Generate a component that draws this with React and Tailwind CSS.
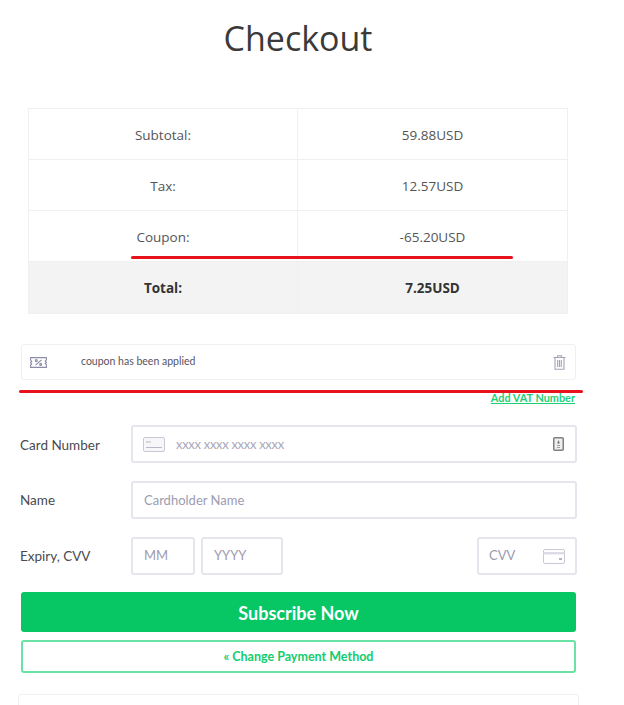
function SummaryRow({ label, value, bold, shaded }) {
  return (
    <div className={`grid grid-cols-[269px_1fr] h-[51px] border-b border-[#f0f0f0] last:border-b-0 text-[13.5px] ${bold ? "font-bold text-[#333333]" : "text-[#555555]"} ${shaded ? "bg-[#f3f3f3]" : ""}`}>
      <div className="flex items-center justify-center pt-[2px] border-r border-[#f0f0f0]">{label}</div>
      <div className="flex items-center justify-center pt-[2px]">{value}</div>
    </div>
  );
}

function TicketIcon() {
  return (
    <svg width="17" height="11" viewBox="0 0 17 11" fill="none" stroke="#8c8ca6" strokeWidth="1.1">
      <path d="M.6.6h15.800v2.400l-1.200 1 1.200 1.500-1.200 1 1.200 1v2.900H.6V8l1.200-1L.6 5.500l1.200-1L.6 3z" />
      <path d="M5.500 8.200l6-5.400" />
      <circle cx="6.300" cy="3.600" r="1" />
      <circle cx="10.700" cy="7.400" r="1" />
    </svg>
  );
}

function TrashIcon() {
  return (
    <svg width="13" height="15" viewBox="0 0 13 15" fill="none" stroke="#a4a4b8" strokeWidth="1.100">
      <path d="M.5 2.500h12M4.500 2.500V.7h4v1.800M2 2.500v11.800h9V2.500M4.700 5v7M6.500 5v7M8.300 5v7" />
    </svg>
  );
}

function CardFrontIcon() {
  return (
    <svg width="22" height="15" viewBox="0 0 22 15" fill="none">
      <rect x=".5" y=".5" width="21" height="14" rx="1.500" fill="#f7f7fa" stroke="#c8c8d6" />
      <path d="M3 5h5M3 10.500h16" stroke="#b8b8c8" strokeWidth="1.200" />
    </svg>
  );
}

function LockBadgeIcon() {
  return (
    <svg width="11" height="14" viewBox="0 0 11 14" fill="none">
      <rect x=".75" y=".75" width="9.500" height="12.500" rx="1" fill="#efefef" stroke="#808080" strokeWidth="1.500" />
      <path d="M5.500 3l1.300 3.500H4.200z" fill="#707070" />
      <path d="M4 8.500h3M4 10.500h3" stroke="#a0a0a0" />
    </svg>
  );
}

function CardBackIcon() {
  return (
    <svg width="22" height="15" viewBox="0 0 22 15" fill="none">
      <rect x=".5" y=".5" width="21" height="14" rx="1.500" fill="#fff" stroke="#c8c8d6" />
      <path d="M.5 3h21v2.500H.5z" fill="#dcdce6" />
      <rect x="16" y="9" width="3" height="2" fill="#b4b4c4" />
    </svg>
  );
}

function Field({ className, children }) {
  return (
    <div className={`flex items-center h-[38px] border-2 border-[#e5e5ee] rounded-[3px] bg-white text-[13px] text-[#9c9cb0] ${className}`}>
      {children}
    </div>
  );
}

export default function App() {
  return (
    <div className="relative h-[705px] w-[624px] overflow-hidden bg-white font-['Lato','Liberation_Sans',sans-serif]">
      {/* Order summary */}
      <h1 className="pt-[14px] h-[108px] pr-[28px] text-center text-[34px] leading-[48px] text-[#3a3a3a] font-['Open_Sans',sans-serif]">
        Checkout
      </h1>
      <div className="ml-[28px] w-[540px] border border-[#f0f0f0] font-['Open_Sans',sans-serif]">
        <SummaryRow label="Subtotal:" value="59.88USD" />
        <SummaryRow label="Tax:" value="12.57USD" />
        <SummaryRow label="Coupon:" value="-65.20USD" />
        <SummaryRow label="Total:" value="7.25USD" bold shaded />
      </div>

      {/* Coupon notice */}
      <div className="mt-[30px] ml-[21px] w-[555px] h-[36px] flex items-center border border-[#f0f0f2] rounded-[3px] pl-[8px] pr-[9px]">
        <TicketIcon />
        <span className="ml-[34px] text-[10.5px] text-[#55555f]">coupon has been applied</span>
        <span className="ml-auto flex"><TrashIcon /></span>
      </div>
      <div className="ml-[21px] w-[554px] h-[45px] pt-[11px] text-right text-[10.9px] leading-[14px] font-bold underline text-[#1fcf78]">
        Add VAT Number
      </div>

      {/* Payment form */}
      <div className="ml-[20px] w-[557px] flex flex-col gap-[18px]">
        <div className="flex items-center">
          <label className="w-[111px] pt-[2px] text-[13.5px] text-[#4a4a4f]">Card Number</label>
          <Field className="flex-1 pl-[10px] pr-[11px]">
            <CardFrontIcon />
            <span className="ml-[11px] pt-[1px] text-[13px] tracking-[-0.3px] text-[#a8a8ba]">xxxx xxxx xxxx xxxx</span>
            <span className="ml-auto flex"><LockBadgeIcon /></span>
          </Field>
        </div>
        <div className="flex items-center">
          <label className="w-[111px] text-[13.5px] text-[#4a4a4f]">Name</label>
          <Field className="flex-1 pl-[11px] pt-[1px]">Cardholder Name</Field>
        </div>
        <div className="flex items-center">
          <label className="w-[111px] text-[13.5px] text-[#4a4a4f]">Expiry, CVV</label>
          <Field className="w-[64px] pl-[11px]">MM</Field>
          <Field className="ml-[6px] w-[82px] pl-[11px]">YYYY</Field>
          <Field className="ml-auto w-[100px] pl-[10px] pr-[10px] justify-between">
            <span>CVV</span>
            <CardBackIcon />
          </Field>
        </div>
      </div>

      {/* Actions */}
      <div className="mt-[17px] ml-[21px] w-[555px] flex flex-col gap-[8px]">
        <button className="h-[40px] pt-[2px] rounded-[3px] bg-[#07c664] text-[18px] font-bold text-white">Subscribe Now</button>
        <button className="h-[33px] pt-[1px] rounded-[3px] border-2 border-[#6ae2a5] bg-white text-[12.5px] font-bold text-[#12cc6e]">
          « Change Payment Method
        </button>
      </div>
      <div className="mt-[21px] ml-[18px] w-[561px] h-[40px] border border-[#f0f0f2] rounded-[3px]" />

      {/* Red annotation lines drawn over the screenshot */}
      <div className="absolute left-[131px] top-[256px] w-[382px] h-[3px] rounded-full bg-[#e8121c]" />
      <div className="absolute left-[19px] top-[390px] w-[564px] h-[3px] rounded-full bg-[#e8121c]" />
    </div>
  );
}
